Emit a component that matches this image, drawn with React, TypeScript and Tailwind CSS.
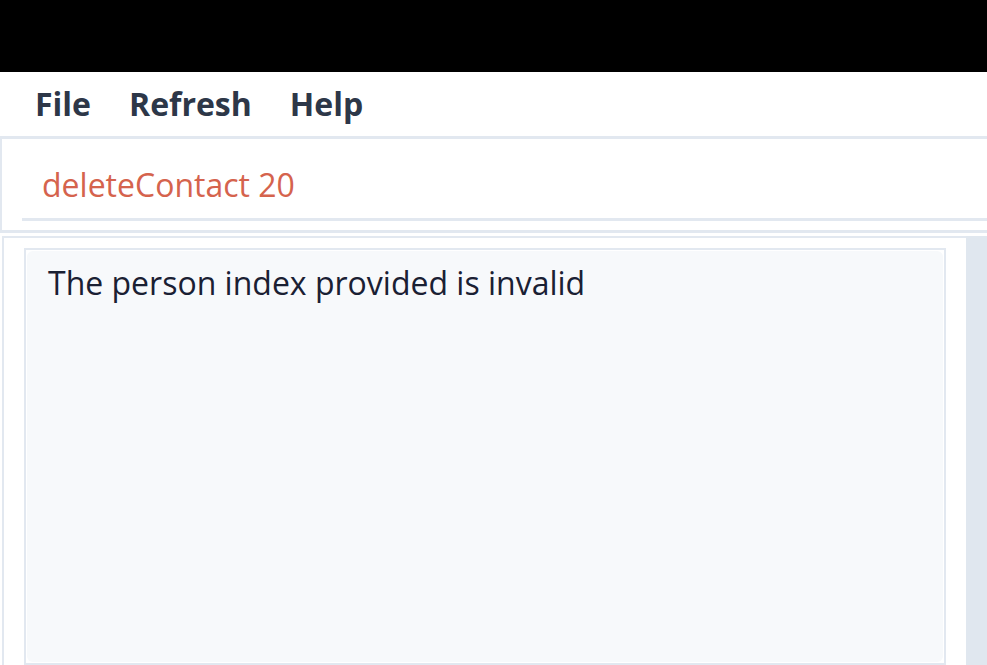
export default function App() {
  return (
    <div className="w-[987px] h-[665px] overflow-hidden bg-white flex flex-col font-['Open_Sans',sans-serif]">
      <div className="h-[72px] bg-black shrink-0" />
      <nav className="h-[67px] shrink-0 flex items-center gap-[38px] pl-[35px] border-b-[3px] border-[#e2e8f0] text-[32px] leading-none font-bold text-[#2d3748]">
        <span>File</span>
        <span>Refresh</span>
        <span>Help</span>
      </nav>
      <div className="h-[94px] shrink-0 border-l-2 border-b-[3px] border-[#e2e8f0] pl-[20px] flex flex-col">
        <div className="flex-1 flex items-end pl-[20px] pb-[17px] border-b-[3px] border-[#e2e8f0] text-[32px] leading-none text-[#d5634d]">
          deleteContact 20
        </div>
        <div className="h-[9px]" />
      </div>
      <div className="flex-1 flex mt-[3px]">
        <div className="flex-1 border-t-2 border-l-2 border-[#e2e8f0] ml-[2px] pt-[10px] pl-[20px] pr-[20px] flex">
          <div className="flex-1 border-2 border-[#e2e8f0] p-[1px]">
            <div className="h-full rounded-md bg-[#f7f9fb] pl-[21px] pt-[16px] text-[32px] leading-none text-[#1a2033]">
              The person index provided is invalid
            </div>
          </div>
        </div>
        <div className="w-[21px] bg-[#e0e7ef]" />
      </div>
    </div>
  );
}
